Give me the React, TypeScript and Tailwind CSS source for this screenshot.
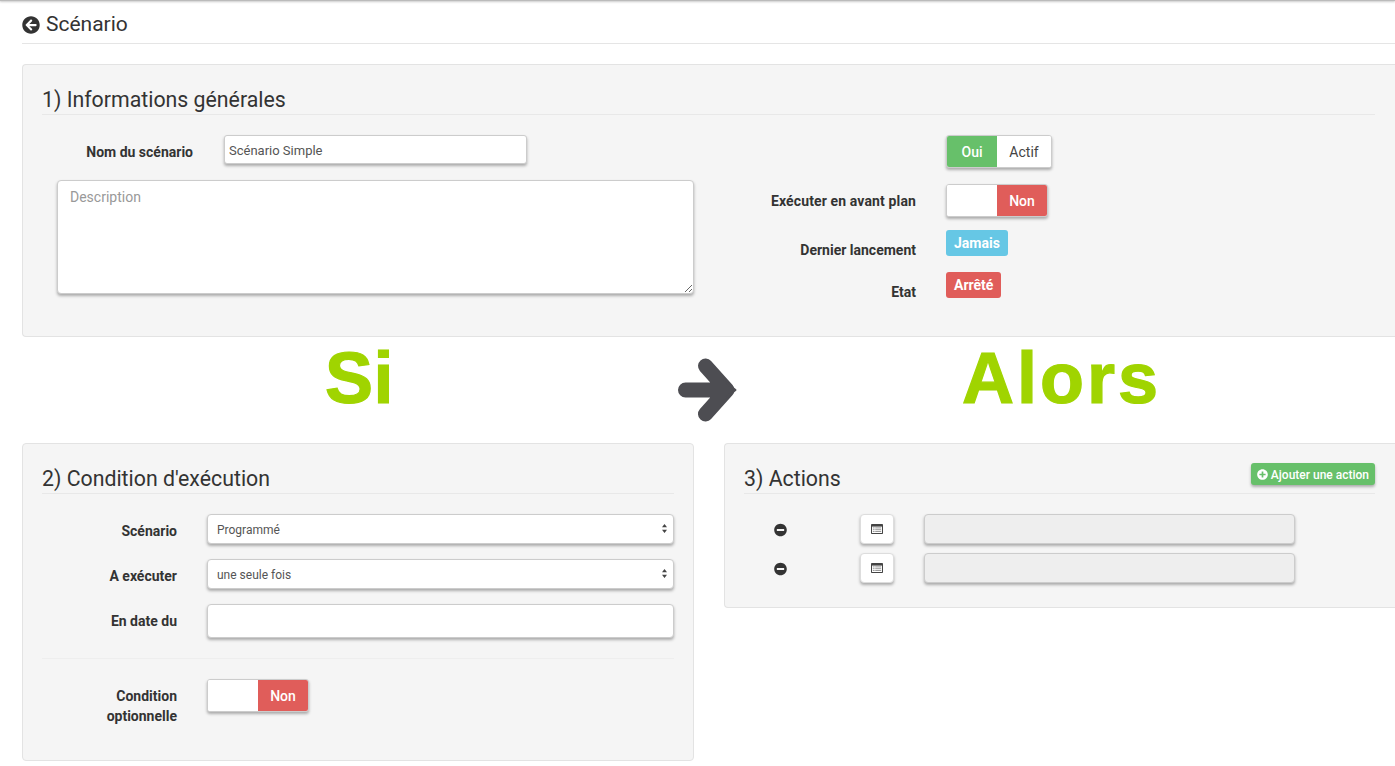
import React from "react";
import { FaArrowCircleLeft, FaMinusCircle, FaPlusCircle } from "react-icons/fa";

const shadow = "shadow-[0_2px_3px_rgba(0,0,0,0.3)]";

function SectionTitle({ children, right }: { children: React.ReactNode; right?: React.ReactNode }) {
  return (
    <div className="flex justify-between border-b border-[#e8e8e8] h-[30px]">
      <h3 className="pt-[1px] text-[21.3px] leading-[27px] font-normal text-[#333]">{children}</h3>
      {right}
    </div>
  );
}

function Label({ children, className = "" }: { children: React.ReactNode; className?: string }) {
  return <label className={`block text-right text-[14px] leading-[20px] font-bold text-[#333] ${className}`}>{children}</label>;
}

function Toggle({ off }: { off?: boolean }) {
  return (
    <div className={`flex h-[33px] w-max rounded-[3px] border border-[#ccc] bg-white overflow-hidden ${shadow} text-[14px] font-medium`}>
      {off ? (
        <>
          <span className="w-[50px] bg-white" />
          <span className="w-[50px] pt-[1px] flex items-center justify-center bg-[#e05d5a] text-white">Non</span>
        </>
      ) : (
        <>
          <span className="w-[50px] pt-[1px] flex items-center justify-center bg-[#67c06a] text-white">Oui</span>
          <span className="w-[54px] pt-[1px] flex items-center justify-center bg-white text-[#444] font-normal">Actif</span>
        </>
      )}
    </div>
  );
}

function Badge({ color, children }: { color: string; children: React.ReactNode }) {
  return (
    <span className={`inline-flex h-[26px] items-center rounded-[3px] px-[8px] text-[14px] font-bold text-white ${color}`}>{children}</span>
  );
}

function Select({ value }: { value: string }) {
  return (
    <div className="relative flex-1">
      <select
        defaultValue={value}
        className={`block w-full h-[30px] appearance-none rounded-[4px] border border-[#ccc] bg-white pl-[9px] pt-[2px] text-[12px] text-[#555] ${shadow}`}
      >
        <option>{value}</option>
      </select>
      <svg viewBox="0 0 6 11" className="absolute right-[7px] top-[9px] w-[5px] h-[11px]">
        <path d="M3 0L6 4H0zM3 11L0 7h6z" fill="#444" />
      </svg>
    </div>
  );
}

function ListIcon() {
  return (
    <svg viewBox="0 0 12 10" className="w-[12px] h-[10px]">
      <rect x="0" y="0" width="12" height="10" rx="0.8" fill="#444" />
      <rect x="1" y="2.6" width="10" height="6.4" fill="#fff" />
      <rect x="1.8" y="3.4" width="1.8" height="1" fill="#999" />
      <rect x="4.2" y="3.4" width="6" height="1" fill="#999" />
      <rect x="1.8" y="5.2" width="1.8" height="1" fill="#999" />
      <rect x="4.2" y="5.2" width="6" height="1" fill="#999" />
      <rect x="1.8" y="7" width="1.8" height="1" fill="#999" />
      <rect x="4.2" y="7" width="6" height="1" fill="#999" />
    </svg>
  );
}

function ActionRow() {
  return (
    <div className="flex items-center h-[30px]">
      <div className="w-[30px] flex justify-center ml-[21px] pt-[2px]">
        <FaMinusCircle className="text-[#333] w-[13px] h-[14px]" />
      </div>
      <button className={`ml-[65px] w-[34px] h-[30px] flex items-center justify-center rounded-[4px] border border-[#ddd] bg-white ${shadow}`}>
        <ListIcon />
      </button>
      <div className={`ml-[30px] w-[371px] h-[30px] rounded-[4px] border border-[#ccc] bg-[#eee] ${shadow}`} />
    </div>
  );
}

export default function App() {
  return (
    <div className="w-[1395px] h-[766px] overflow-hidden bg-white font-['Roboto',sans-serif] text-[#333]">
      <div className="h-[1px] bg-[#bbb] shadow-[0_1px_2px_rgba(0,0,0,0.3)]" />
      <div className="pl-[22px]">
        <div className="h-[43px] border-b border-[#e5e5e5] flex items-center gap-[6px] pt-[5px]">
          <FaArrowCircleLeft className="w-[18px] h-[18px] text-[#333]" />
          <span className="text-[21px] text-[#333]">Scénario</span>
        </div>

        <section className="mt-[20px] h-[273px] rounded-l-[4px] border border-r-0 border-[#e3e3e3] bg-[#f5f5f5] pt-[20px] pl-[19px] pr-[20px]">
          <SectionTitle>1) Informations générales</SectionTitle>
          <div className="flex">
            <div className="w-[652px] shrink-0">
              <div className="flex items-center mt-[20px]">
                <Label className="w-[151px] pt-[4px]">Nom du scénario</Label>
                <input
                  defaultValue="Scénario Simple"
                  className={`ml-[31px] w-[303px] h-[29px] rounded-[3px] border border-[#ccc] bg-white px-[4px] pt-[2px] text-[13px] text-[#555] ${shadow}`}
                />
              </div>
              <textarea
                placeholder="Description"
                className={`block mt-[16px] ml-[15px] w-[637px] h-[114px] rounded-[4px] border border-[#ccc] bg-white px-[12px] py-[6px] text-[14px] text-[#555] placeholder:text-[#999] ${shadow}`}
              />
            </div>
            <div className="flex-1">
              <div className="flex mt-[20px] h-[33px] pl-[252px]"><Toggle /></div>
              <div className="flex items-center mt-[16px]">
                <Label className="w-[222px] tracking-[0.13px]">Exécuter en avant plan</Label>
                <div className="ml-[30px]"><Toggle off /></div>
              </div>
              <div className="flex mt-[13px]">
                <Label className="w-[222px] pt-[10px]">Dernier lancement</Label>
                <div className="ml-[30px]"><Badge color="bg-[#66c7e5]">Jamais</Badge></div>
              </div>
              <div className="flex mt-[12px]">
                <Label className="w-[222px] pt-[10px]">Etat</Label>
                <div className="ml-[30px]"><Badge color="bg-[#e05d5a]">Arrêté</Badge></div>
              </div>
            </div>
          </div>
        </section>

        <div className="h-[106px] flex">
          <div className="w-[672px] relative">
            <div className="pl-[303px] pt-[1px] text-[72px] leading-[80px] font-bold text-[#a0d400] font-['Liberation_Sans',sans-serif] tracking-[0.5px] [-webkit-text-stroke:1.2px_#a0d400]">Si</div>
          </div>
          <div className="flex-1 relative">
            <svg viewBox="0 0 60 62" className="absolute left-[-16px] top-[22px] w-[60px] h-[62px] overflow-visible">
              <path d="M7.5 31H48M27.5 7L49 31L27.5 55" fill="none" stroke="#4d4d52" strokeWidth="15" strokeLinecap="round" strokeLinejoin="round" />
              <path d="M46 22L57.5 31L46 40z" fill="#4d4d52" stroke="#4d4d52" strokeWidth="2" strokeLinejoin="round" />
            </svg>
            <div className="pl-[268px] pt-[1px] text-[72px] leading-[80px] font-bold text-[#a0d400] font-['Liberation_Sans',sans-serif] tracking-[3px] [-webkit-text-stroke:1.2px_#a0d400]">Alors</div>
          </div>
        </div>

        <div className="flex items-start gap-[30px]">
          <section className="w-[672px] h-[318px] rounded-[4px] border border-[#e3e3e3] bg-[#f5f5f5] pt-[20px] px-[19px]">
            <SectionTitle>2) Condition d'exécution</SectionTitle>
            <div className="flex items-center mt-[20px]">
              <Label className="w-[135px] pt-[4px]">Scénario</Label>
              <div className="ml-[30px] flex-1 flex"><Select value="Programmé" /></div>
            </div>
            <div className="flex items-center mt-[15px]">
              <Label className="w-[135px] pt-[4px]">A exécuter</Label>
              <div className="ml-[30px] flex-1 flex"><Select value="une seule fois" /></div>
            </div>
            <div className="flex items-center mt-[15px]">
              <Label className="w-[135px]">En date du</Label>
              <input className={`ml-[30px] flex-1 h-[34px] rounded-[4px] border border-[#ccc] bg-white ${shadow}`} />
            </div>
            <div className="mt-[20px] border-t border-[#eee]" />
            <div className="flex mt-[20px]">
              <Label className="w-[135px] pt-[7px]">Condition<br />optionnelle</Label>
              <div className="ml-[30px]"><Toggle off /></div>
            </div>
          </section>

          <section className="flex-1 h-[165px] rounded-l-[4px] border border-r-0 border-[#e3e3e3] bg-[#f5f5f5] pt-[20px] pl-[19px] pr-[20px]">
            <SectionTitle
              right={
                <button className={`flex items-center gap-[3px] h-[22px] pt-[1px] rounded-[3px] bg-[#67c06a] px-[6px] text-[12px] font-medium text-white -mt-[1px] ${shadow}`}>
                  <FaPlusCircle className="w-[11px] h-[11px]" />
                  Ajouter une action
                </button>
              }
            >
              3) Actions
            </SectionTitle>
            <div className="mt-[20px] flex flex-col gap-[9px]">
              <ActionRow />
              <ActionRow />
            </div>
          </section>
        </div>
      </div>
    </div>
  );
}
